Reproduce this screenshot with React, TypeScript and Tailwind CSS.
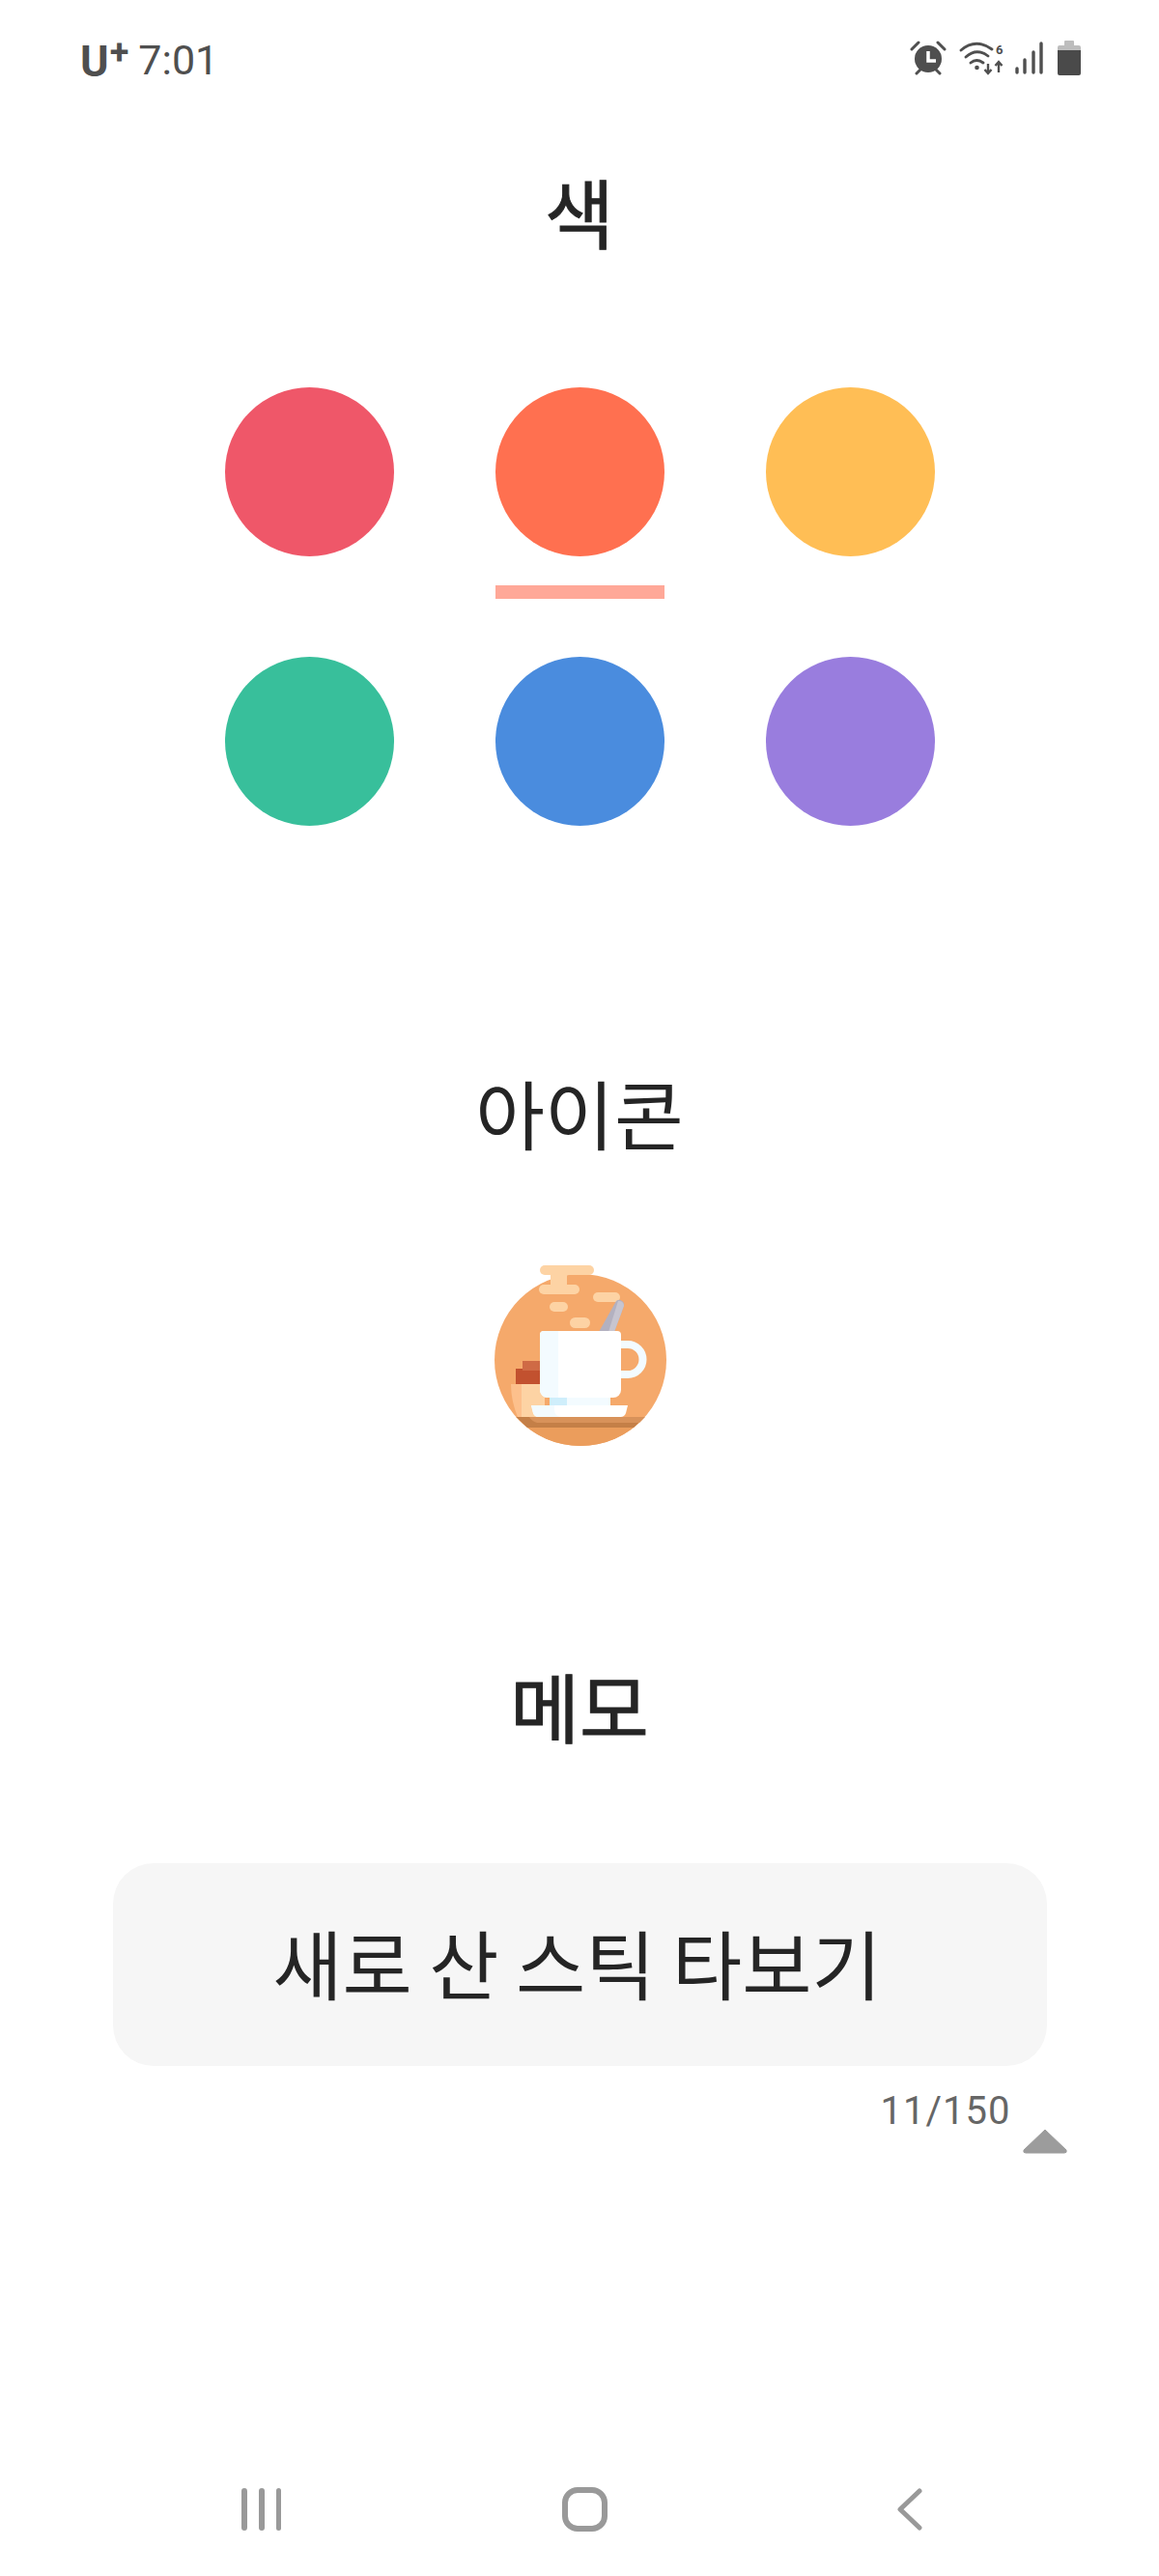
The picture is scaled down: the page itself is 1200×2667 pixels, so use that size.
const ko = "font-['Noto_Sans_CJK_KR','Noto_Sans',sans-serif]";

function Coffee() {
  return (
    <svg viewBox="0 0 220 220" className="w-[220px] h-[220px]">
      <circle cx="111" cy="119" r="89" fill="#f5a96b" />
      <path d="M44.400 178 H177.600 A89 89 0 0 1 44.400 178Z" fill="#eb9d5c" />
      <path d="M44.400 178 H177.600 L166 189 H56Z" fill="#c47f47" />
      <path d="M44.400 178 H177.600 L172 184 H66 Q60 182 58 178Z" fill="#d8925a" />
      <rect x="69" y="21" width="56" height="10" rx="5" fill="#fdd3a4" />
      <rect x="80" y="28" width="17" height="14" fill="#fdd3a4" />
      <rect x="68" y="41" width="42" height="10" rx="5" fill="#fdd3a4" />
      <rect x="124" y="49" width="28" height="10" rx="5" fill="#fdd3a4" />
      <rect x="79" y="59" width="19" height="10" rx="5" fill="#fdd3a4" />
      <rect x="100" y="75" width="21" height="11" rx="5.5" fill="#fdd3a4" />
      <path d="M130 90 L148 58 A5 5 0 0 1 156 63 L146 90Z" fill="#b3b1c0" />
      <path d="M140 90 L150 58 A5 5 0 0 1 156 63 L146 90Z" fill="#c7c5d0" />
      <rect x="44" y="128" width="30" height="16" fill="#c2512f" />
      <rect x="51" y="120" width="20" height="10" fill="#cf6a45" />
      <path d="M39 144 H70 V178 H46 A89 89 0 0 1 39 144Z" fill="#fdc08c" />
      <path d="M50 144 H74 V178 H50Z" fill="#fdd3a4" />
      <path d="M153 103 H160 A15.500 15.500 0 0 1 160 134 H153" fill="none" stroke="#f3fbff" strokeWidth="8" />
      <rect x="79" y="158" width="63" height="10" fill="#f3fbff" />
      <rect x="79" y="158" width="18" height="10" fill="#cfeefb" />
      <path d="M69 93 A4 4 0 0 1 73 89 H149 A4 4 0 0 1 153 93 V150 A8 8 0 0 1 145 158 H77 A8 8 0 0 1 69 150Z" fill="#ffffff" />
      <path d="M69 93 A4 4 0 0 1 73 89 H88 V158 H77 A8 8 0 0 1 69 150Z" fill="#f3fbff" />
      <path d="M60 166 H160 L158 174 A6 6 0 0 1 152 178 H68 A6 6 0 0 1 62 174Z" fill="#ffffff" />
      <path d="M60 166 H84 V170 Q84 178 92 178 H68 A6 6 0 0 1 62 174Z" fill="#f3fbff" />
    </svg>
  );
}

function StatusIcons() {
  return (
    <div className="flex items-start text-[#4f4f4f]">
      <svg viewBox="0 0 38 36" className="w-[38px] h-[36px]">
        <circle cx="19" cy="19" r="14" fill="#4f4f4f" />
        <path d="M2 9 L9 2 M36 9 L29 2 M7 34 L11 30 M31 34 L27 30" stroke="#4f4f4f" strokeWidth="3" strokeLinecap="round" />
        <path d="M19 11 V21 H27" fill="none" stroke="#fff" strokeWidth="3.500" />
      </svg>
      <svg viewBox="0 0 48 36" className="w-[48px] h-[36px] ml-[13px]">
        <path d="M2 10 Q17 -3 34 9 M7 17 Q18 7 30 16 M12 23 Q18 18 25 23" fill="none" stroke="#4f4f4f" strokeWidth="2.800" strokeLinecap="round" />
        <circle cx="18.500" cy="28" r="2.300" fill="#4f4f4f" />
        <path d="M30 24 V34 M26.500 30 L30 34 L33.500 30 M41 33 V22 M37.500 26 L41 22 L44.500 26" fill="none" stroke="#4f4f4f" strokeWidth="2.400" />
        <text x="38" y="14" fontSize="13" fontWeight="700" fill="#4f4f4f" fontFamily="Roboto, sans-serif">6</text>
      </svg>
      <svg viewBox="0 0 32 36" className="w-[32px] h-[36px] ml-[8px]">
        <path d="M4 33 V29 M12 33 V20 M21 33 V12 M29 33 V3" stroke="#4f4f4f" strokeWidth="3.400" strokeLinecap="round" />
      </svg>
      <svg viewBox="0 0 24 36" className="w-[24px] h-[36px] ml-[14px]">
        <rect x="7" y="0" width="10" height="6" rx="1" fill="#bdbdbd" />
        <path d="M0 7 A2 2 0 0 1 2 5 H22 A2 2 0 0 1 24 7 V10 H0Z" fill="#bdbdbd" />
        <path d="M0 10 H24 V34 A2 2 0 0 1 22 36 H2 A2 2 0 0 1 0 34Z" fill="#4a4a4a" />
      </svg>
    </div>
  );
}

export default function App() {
  const colors = ["#ef5769", "#ff7050", "#ffbe55", "#38bf9b", "#4a8cde", "#997dde"];
  return (
    <div className={`w-[1200px] h-[2667px] bg-white flex flex-col items-center overflow-hidden relative ${ko}`}>
      <div className="w-full h-[80px] shrink-0 pl-[83px] pr-[81px] pt-[42px] flex items-start justify-between font-['Roboto',sans-serif]">
        <div className="flex items-start text-[#4f4f4f] h-[44px]">
          <span className="text-[45px] leading-[44px] font-bold">U</span>
          <span className="text-[36px] leading-[30px] font-bold ml-[1px] -mt-[3px]">+</span>
          <span className="text-[43px] leading-[44px] ml-[10px] -mt-[2px]">7:01</span>
        </div>
        <StatusIcons />
      </div>

      <h2 className="mt-[88px] text-[78px] leading-[100px] font-normal text-[#252525] [-webkit-text-stroke:1px_#252525]">색</h2>

      <div className="mt-[133px] grid grid-cols-[175px_175px_175px] gap-x-[105px]">
        {colors.map((c, i) => (
          <div key={c} className={i < 3 ? "h-[279px] flex flex-col" : "h-[175px]"}>
            <div className="w-[175px] h-[175px] rounded-full" style={{ backgroundColor: c }} />
            {i === 1 && <div className="mt-[30px] h-[14px] bg-[#ffa898]" />}
          </div>
        ))}
      </div>

      <h2 className="mt-[246px] text-[78px] leading-[100px] font-normal text-[#252525]">아이콘</h2>

      <div className="mt-[88px] h-[220px] w-[220px]">
        <Coffee />
      </div>

      <h2 className="mt-[206px] text-[78px] leading-[100px] font-normal text-[#252525] [-webkit-text-stroke:1px_#252525]">메모</h2>

      <div className="mt-[114px] w-[967px] h-[210px] rounded-[42px] bg-[#f6f6f6] flex items-center justify-center text-[78.500px] text-[#252525] pb-[5px] pr-[5px]">
        새로 산 스틱 타보기
      </div>

      <div className="w-[967px] relative h-[60px] font-['Roboto',sans-serif]">
        <div className="absolute right-[37px] top-[25px] text-[40px] leading-[44px] text-[#666666] tracking-[1px]">11/150</div>
        <svg viewBox="0 0 48 28" className="absolute -right-[22px] top-[64px] w-[48px] h-[28px]">
          <path d="M24 2 L46 23 Q47 26 44 26 H4 Q1 26 2 23Z" fill="#9c9c9c" stroke="#9c9c9c" strokeLinejoin="round" />
        </svg>
      </div>

      <div className="mt-auto w-full h-[110px] shrink-0 flex items-start pl-[250px] pt-[18px]">
        <div className="flex gap-[12px] mt-[1px]">
          <div className="w-[6px] h-[44px] rounded-full bg-[#999999]" />
          <div className="w-[6px] h-[44px] rounded-full bg-[#999999]" />
          <div className="w-[5px] h-[44px] rounded-full bg-[#999999]" />
        </div>
        <div className="ml-[291px] w-[47px] h-[46px] rounded-[16px] border-[6px] border-[#999999]" />
        <svg viewBox="0 0 26 44" className="ml-[300px] mt-[1px] w-[26px] h-[44px]">
          <path d="M23 3 L3 22 L23 41" fill="none" stroke="#999999" strokeWidth="5" strokeLinecap="round" strokeLinejoin="round" />
        </svg>
      </div>
    </div>
  );
}
